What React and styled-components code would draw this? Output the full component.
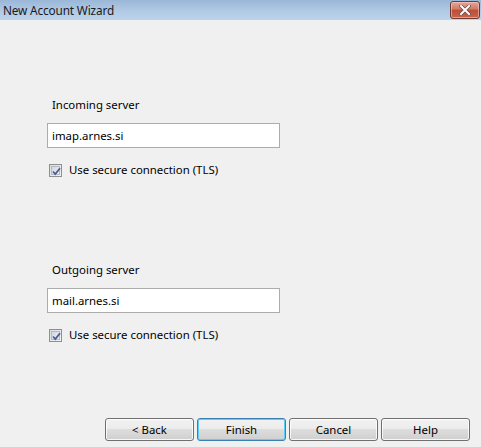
import React from "react";
import styled, { createGlobalStyle } from "styled-components";

const Global = createGlobalStyle`
  html, body { margin: 0; padding: 0; background: #f0f0f0; }
  body { font-family: "Noto Sans", "Segoe UI", sans-serif; font-size: 11.4px; color: #000; }
`;

const Window = styled.div`
  width: 481px;
  height: 447px;
  display: flex;
  flex-direction: column;
  background: #f0f0f0;
  overflow: hidden;
`;

const TitleBar = styled.div`
  height: 20px;
  flex: none;
  display: flex;
  align-items: center;
  justify-content: space-between;
  padding-left: 3px;
  background: linear-gradient(#9ab7d8, #b3cbe6 60%, #bcd3eb);
`;

const Title = styled.span`
  font-size: 11.8px;
  letter-spacing: -0.15px;
  color: #1a1a1a;
  line-height: 20px;
`;

const CloseButton = styled.div`
  width: 30px;
  height: 18px;
  margin-top: -1px;
  margin-right: 1px;
  box-sizing: border-box;
  border: 1px solid #6b3a32;
  border-radius: 3px;
  background: linear-gradient(#e4a898, #d27865 45%, #bf4c36 50%, #c8644c);
  box-shadow: inset 0 0 0 1px rgba(255, 220, 210, 0.5);
  display: flex;
  align-items: center;
  justify-content: center;
`;

const Content = styled.div`
  flex: 1;
  display: flex;
  flex-direction: column;
  gap: 85px;
  padding: 77px 0 0 47px;
`;

const Section = styled.div`
  display: flex;
  flex-direction: column;
  align-items: flex-start;
`;

const Label = styled.div`
  line-height: 16px;
  padding-left: 5px;
  margin-bottom: 10px;
`;

const TextBox = styled.div`
  width: 233px;
  height: 25px;
  box-sizing: border-box;
  border: 1px solid #acacac;
  background: #fff;
  padding-left: 4px;
  display: flex;
  align-items: center;
  line-height: 16px;
`;

const CheckRow = styled.div`
  display: flex;
  align-items: center;
  gap: 7px;
  margin-top: 15px;
  margin-left: 2px;
  line-height: 14px;
`;

const Box = styled.div`
  width: 13px;
  height: 13px;
  box-sizing: border-box;
  border: 1px solid #8e8f8f;
  background: linear-gradient(135deg, #dcdcdc, #f6f6f6);
  padding: 1px;
  display: flex;
`;

const BoxInner = styled.div`
  flex: 1;
  border: 1px solid #b6b9c3;
  background: linear-gradient(135deg, #d3d6dc, #eef0f3);
  position: relative;
`;

const Footer = styled.div`
  flex: none;
  display: flex;
  justify-content: flex-end;
  gap: 3px;
  padding: 0 11px 6px 0;
`;

const Button = styled.div`
  width: 89px;
  height: 23px;
  box-sizing: border-box;
  border: 1px solid ${(p) => (p.$default ? "#3c7fb1" : "#707070")};
  border-radius: 3px;
  display: flex;
  align-items: center;
  justify-content: center;
  background: linear-gradient(#f2f2f2, #ebebeb 50%, #dddddd 50%, #cfcfcf);
  box-shadow: inset 0 0 0 1px ${(p) => (p.$default ? "#5ed0f5" : "rgba(255,255,255,0.8)")};
  line-height: 16px;
`;

const Check = () => (
  <svg width="9" height="9" viewBox="0 0 9 9" style={{ position: "absolute", left: 0, top: 0 }}>
    <path d="M1 4.5 L3.3 7 L8 1.2" fill="none" stroke="#4a5f97" strokeWidth="1.8" />
  </svg>
);

const CloseX = () => (
  <svg width="12" height="10" viewBox="0 0 12 10">
    <path d="M2 1 L10 9 M10 1 L2 9" stroke="#6a4a44" strokeWidth="3.4" strokeLinecap="square" />
    <path d="M2 1 L10 9 M10 1 L2 9" stroke="#ffffff" strokeWidth="2" strokeLinecap="square" />
  </svg>
);

const ServerSection = ({ label, value }) => (
  <Section>
    <Label>{label}</Label>
    <TextBox>{value}</TextBox>
    <CheckRow>
      <Box>
        <BoxInner>
          <Check />
        </BoxInner>
      </Box>
      <span>Use secure connection (TLS)</span>
    </CheckRow>
  </Section>
);

export default function App() {
  return (
    <>
      <Global />
      <Window>
        <TitleBar>
          <Title>New Account Wizard</Title>
          <CloseButton>
            <CloseX />
          </CloseButton>
        </TitleBar>
        <Content>
          <ServerSection label="Incoming server" value="imap.arnes.si" />
          <ServerSection label="Outgoing server" value="mail.arnes.si" />
        </Content>
        <Footer>
          <Button>&lt; Back</Button>
          <Button $default>Finish</Button>
          <Button>Cancel</Button>
          <Button>Help</Button>
        </Footer>
      </Window>
    </>
  );
}
